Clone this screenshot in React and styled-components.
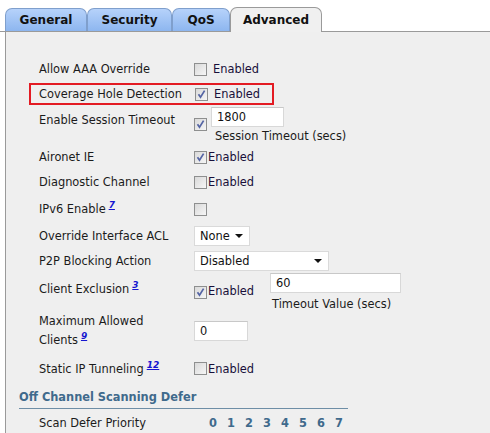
import React from "react";
import styled, { createGlobalStyle } from "styled-components";

const Global = createGlobalStyle`
  html, body { margin: 0; padding: 0; background: #fff; }
  body { font-family: "DejaVu Sans", Verdana, sans-serif; font-size: 11.4px; color: #1b1b1b; }
`;

const Page = styled.div`
  width: 490px;
  height: 433px;
  overflow: hidden;
  padding-top: 7px;
  box-sizing: border-box;
`;

const TabBar = styled.div`
  display: flex;
  align-items: flex-end;
  padding-left: 5px;
  height: 24px;
  border-bottom: 1px solid #9a9a9a;
`;

const Tab = styled.div`
  width: ${(p) => p.w}px;
  box-sizing: border-box;
  display: flex;
  align-items: center;
  justify-content: center;
  font-weight: bold;
  font-size: 12px;
  color: #111;
  border: 1px solid ${(p) => (p.active ? "#9a9a9a" : "#7f9fcc")};
  border-bottom: none;
  border-radius: 7px 7px 0 0;
  background: ${(p) =>
    p.active ? "#f0f0f0" : "linear-gradient(#b6d2fa, #8db6ef)"};
  margin-bottom: ${(p) => (p.active ? "-1px" : "0")};
  height: ${(p) => (p.active ? 25 : 23)}px;
  padding-bottom: ${(p) => (p.active ? 1 : 0)}px;
`;

const Panel = styled.div`
  background: #efefef;
  border-left: 1px solid #9a9a9a;
  margin-left: 5px;
  height: 402px;
  padding-top: 25px;
  box-sizing: border-box;
`;

const Row = styled.div`
  display: grid;
  grid-template-columns: 155px auto;
  align-items: ${(p) => (p.top ? "start" : "center")};
  height: ${(p) => p.h}px;
  padding-left: 33px;
  box-sizing: border-box;
  padding-top: ${(p) => p.pt || 0}px;
`;

const Highlight = styled(Row)`
  margin-left: 23px;
  width: 245px;
  border: 2px solid #e31b23;
  padding-left: 8px;
  grid-template-columns: 156px auto;
  margin-top: 2px;
  margin-bottom: 2px;
`;

const Label = styled.div`
  line-height: ${(p) => p.lh || 18}px;
  padding-top: ${(p) => p.pt || 0}px;
`;

const Sup = styled.a`
  font-size: 9px;
  font-weight: bold;
  font-style: italic;
  color: #1515d0;
  text-decoration: underline;
  vertical-align: 5px;
  line-height: 0;
  margin-left: 3px;
`;

const Control = styled.div`
  display: flex;
  align-items: ${(p) => p.align || "center"};
  gap: ${(p) => p.gap || 0}px;
`;

const BoxWrap = styled.span`
  display: inline-block;
  width: 13px;
  height: 13px;
  box-sizing: border-box;
  border: 1px solid #8e8f8f;
  background: linear-gradient(135deg, #d9d9d9, #f6f6f6);
  position: relative;
  flex: none;
  margin-right: ${(p) => p.mr ?? 0}px;
  margin-top: ${(p) => p.mt || 0}px;
`;

const CheckBox = ({ checked, mr, mt }) => (
  <BoxWrap mr={mr} mt={mt}>
    {checked && (
      <svg width="11" height="11" viewBox="0 0 11 11" style={{ position: "absolute", left: 0, top: 0 }}>
        <path d="M2.5 5.2 L4.5 8.2 L8.6 1.6" fill="none" stroke="#5464a4" strokeWidth="1.7" />
      </svg>
    )}
  </BoxWrap>
);

const Text = styled.span`
  color: #180f3a;
  margin-top: ${(p) => p.mt || 0}px;
`;

const Input = styled.div`
  width: ${(p) => p.w}px;
  height: 20px;
  box-sizing: border-box;
  background: #fff;
  border: 1px solid #d8d8d8;
  border-top-color: #c8c8c8;
  padding: 0 5px;
  display: flex;
  align-items: center;
  color: #111;
`;

const Select = styled.div`
  width: ${(p) => p.w}px;
  height: 20px;
  box-sizing: border-box;
  background: #fff;
  border: 1px solid #dadada;
  padding: 0 5px;
  display: flex;
  align-items: center;
  justify-content: space-between;
  color: #111;
`;

const Arrow = styled.span`
  width: 0;
  height: 0;
  border-left: 4px solid transparent;
  border-right: 4px solid transparent;
  border-top: 4px solid #111;
  margin-right: 1px;
`;

const Stack = styled.div`
  display: flex;
  flex-direction: column;
  gap: ${(p) => p.gap || 0}px;
  padding-left: ${(p) => p.pl || 0}px;
`;

const SubLabel = styled.div`
  padding-left: ${(p) => p.pl || 0}px;
  line-height: 14px;
`;

const Heading = styled.div`
  margin-left: 13px;
  width: 329px;
  color: #3f6a8c;
  font-weight: bold;
  border-bottom: 1px solid #6e8ea6;
  height: 25px;
  line-height: 24px;
  box-sizing: border-box;
  padding-top: 1px;
`;

const Digits = styled.div`
  display: flex;
  padding-left: 15px;
`;

const Digit = styled.span`
  width: 18px;
  color: #3f6a8c;
  font-weight: bold;
`;

export default function App() {
  return (
    <Page>
      <Global />
      <TabBar>
        <Tab w={82}>General</Tab>
        <Tab w={85}>Security</Tab>
        <Tab w={58}>QoS</Tab>
        <Tab w={92} active>Advanced</Tab>
      </TabBar>
      <Panel>
        <Row h={24}>
          <Label>Allow AAA Override</Label>
          <Control><CheckBox mr={6} /><Text>Enabled</Text></Control>
        </Row>
        <Highlight h={22}>
          <Label>Coverage Hole Detection</Label>
          <Control><CheckBox checked mr={6} /><Text>Enabled</Text></Control>
        </Highlight>
        <Row h={38} top>
          <Label pt={4}>Enable Session Timeout</Label>
          <Control align="flex-start">
            <CheckBox checked mr={4} mt={11} />
            <Stack gap={2}>
              <Input w={73}>1800</Input>
              <SubLabel pl={4}>Session Timeout (secs)</SubLabel>
            </Stack>
          </Control>
        </Row>
        <Row h={24}>
          <Label>Aironet IE</Label>
          <Control><CheckBox checked mr={1} /><Text>Enabled</Text></Control>
        </Row>
        <Row h={26}>
          <Label>Diagnostic Channel</Label>
          <Control><CheckBox mr={1} /><Text>Enabled</Text></Control>
        </Row>
        <Row h={28}>
          <Label>IPv6 Enable<Sup>7</Sup></Label>
          <Control><CheckBox /></Control>
        </Row>
        <Row h={25}>
          <Label>Override Interface ACL</Label>
          <Control><Select w={56}>None<Arrow /></Select></Control>
        </Row>
        <Row h={25}>
          <Label>P2P Blocking Action</Label>
          <Control><Select w={135}>Disabled<Arrow /></Select></Control>
        </Row>
        <Row h={38} top>
          <Label pt={7}>Client Exclusion<Sup>3</Sup></Label>
          <Control align="flex-start">
            <CheckBox checked mr={1} mt={13} />
            <Text mt={11}>Enabled</Text>
            <Stack gap={4} pl={16}>
              <Input w={131}>60</Input>
              <SubLabel pl={2}>Timeout Value (secs)</SubLabel>
            </Stack>
          </Control>
        </Row>
        <Row h={40}>
          <Label lh={19}>Maximum Allowed<br />Clients<Sup>9</Sup></Label>
          <Control><Input w={54}>0</Input></Control>
        </Row>
        <Row h={33} pt={2}>
          <Label>Static IP Tunneling<Sup>12</Sup></Label>
          <Control><CheckBox mr={1} /><Text>Enabled</Text></Control>
        </Row>
        <Heading>Off Channel Scanning Defer</Heading>
        <Row h={26} pt={2}>
          <Label>Scan Defer Priority</Label>
          <Digits>
            {[0, 1, 2, 3, 4, 5, 6, 7].map((d) => (
              <Digit key={d}>{d}</Digit>
            ))}
          </Digits>
        </Row>
      </Panel>
    </Page>
  );
}
